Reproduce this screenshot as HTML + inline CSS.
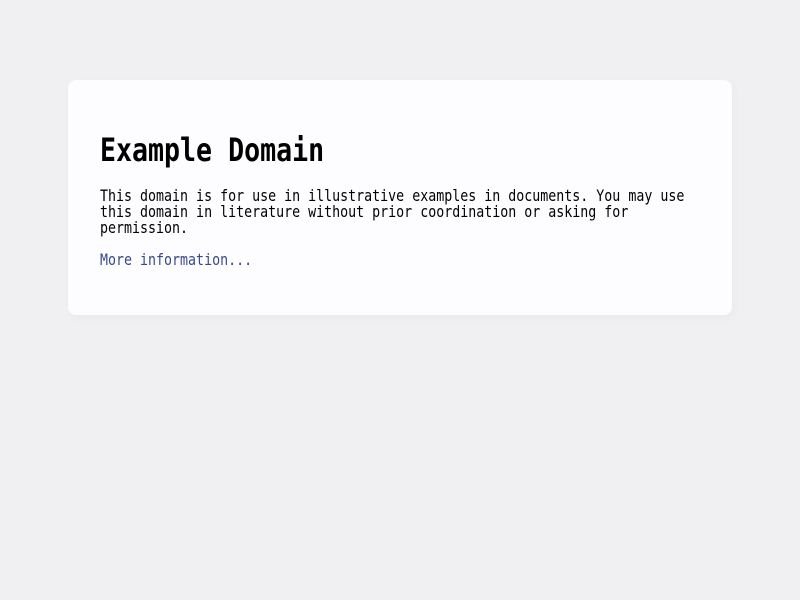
<!DOCTYPE html>
<html><head><meta charset="utf-8"><style>
html,body{margin:0;padding:0;background:#f0f0f2;width:800px;height:600px;overflow:hidden}
.card{position:absolute;left:68px;top:80px;width:664px;height:235px;background:#fdfdff;border-radius:8px;box-shadow:2px 3px 7px 2px rgba(0,0,0,0.02)}
.t{position:absolute;left:100px;white-space:nowrap;font-family:"DejaVu Sans Mono","Liberation Mono",monospace;transform:scaleX(0.831);transform-origin:0 0;color:#000}
h1{margin:0;font-size:32px;line-height:38px;font-weight:bold}
p{margin:0;font-size:16px;line-height:16px}
a{color:#38488f;text-decoration:none}
</style></head><body>
<div class="card"></div>
<div class="t" style="top:131px"><h1>Example Domain</h1></div>
<div class="t" style="top:188px"><p>This domain is for use in illustrative examples in documents. You may use<br>this domain in literature without prior coordination or asking for<br>permission.</p></div>
<div class="t" style="top:252px"><p><a>More information...</a></p></div>
</body></html>
